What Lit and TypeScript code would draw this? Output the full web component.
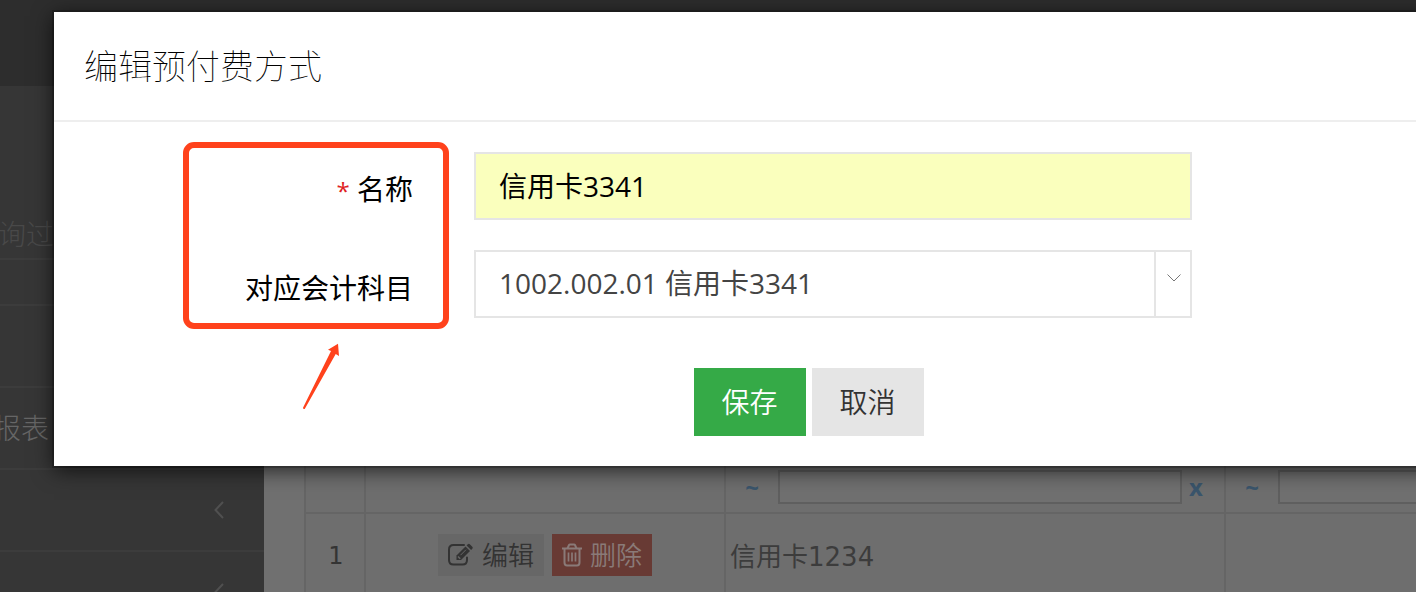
import { LitElement, html, css } from "lit";
import { customElement, state } from "lit/decorators.js";

const editIcon = html`<svg class="ico edit" viewBox="0 0 28 24" aria-hidden="true">
  <path d="M17 2H6.500Q2 2 2 6.500V17Q2 21.500 6.500 21.500H15.500Q20 21.500 20 17V14.500" fill="none" stroke="currentColor" stroke-width="2" stroke-linecap="round"/>
  <path d="M9.500 12.500 18.500 3.500 23 8 14 17H9.500Z" fill="currentColor"/>
  <path d="M19.600 2.400 20.800 1.200Q21.800 .3 22.800 1.200L25.300 3.700Q26.300 4.700 25.300 5.700L24.100 6.900Z" fill="currentColor"/>
  <path d="M13.500 12.200 19 6.700" stroke="#676767" stroke-width="1"/>
  <path d="M11 13.500 13.200 15.700" stroke="#676767" stroke-width="1.500"/>
</svg>`;

const trashIcon = html`<svg class="ico trash" viewBox="0 0 22 24" aria-hidden="true">
  <g fill="none" stroke="currentColor" stroke-width="2">
    <path d="M1 5.500H21M3.500 5.500V19.500Q3.500 22.500 6 22.500H16Q18.500 22.500 18.500 19.500V5.500"/>
    <path d="M6.500 5.500 8 2Q8.300 1.500 9 1.500H13Q13.700 1.500 14 2L15.500 5.500"/>
    <path d="M7.500 9.500V18.500M11 9.500V18.500M14.500 9.500V18.500" stroke-width="1.700"/>
  </g>
</svg>`;

@customElement("app-sidebar")
export class AppSidebar extends LitElement {
  static styles = css`
    :host {
      display: block;
      flex: 0 0 264px;
      background: #363636;
      color: #666;
      overflow: hidden;
      font: 300 28px/48px "Open Sans", "Noto Sans CJK SC", sans-serif;
    }
    ul { list-style: none; margin: 0; padding: 0; }
    li {
      display: flex;
      align-items: center;
      justify-content: space-between;
      box-sizing: border-box;
      height: 82px;
      padding-right: 40px;
      border-bottom: 2px solid #3c3c3c;
    }
    .search { height: 174px; align-items: flex-end; color: #494949; }
    .search span { margin-left: -2px; }
    .short { height: 46px; }
    .report { margin-left: -7px; }
    svg { width: 10px; height: 18px; margin-left: auto; }
  `;
  render() {
    const chevron = html`<svg viewBox="0 0 10 18" aria-hidden="true">
      <path d="M9 1 1.500 9 9 17" fill="none" stroke="#505050" stroke-width="2"/>
    </svg>`;
    return html`<ul>
      <li class="search"><span>询过</span></li>
      <li class="short"></li>
      <li></li>
      <li><span class="report">报表</span></li>
      <li>${chevron}</li>
      <li>${chevron}</li>
    </ul>`;
  }
}

@customElement("payment-table")
export class PaymentTable extends LitElement {
  static styles = css`
    :host {
      display: block;
      flex: 1;
      min-width: 0;
      overflow: hidden;
      background: #707070;
      padding: 374px 0 0 40px;
    }
    table {
      table-layout: fixed;
      width: 1422px;
      border-collapse: separate;
      border-spacing: 0;
      border: solid #656565;
      border-width: 2px 0 0 2px;
      background: #6e6e6e;
      color: #343434;
      font: 26px/42px "DejaVu Sans", "Noto Sans CJK SC", sans-serif;
    }
    td {
      box-sizing: border-box;
      padding: 0;
      border: solid #656565;
      border-width: 0 2px 2px 0;
    }
    .no { width: 60px; text-align: center; font-size: 24px; }
    .row .no { padding: 2px 0 0 2px; }
    .act { width: 360px; }
    .filters td { height: 52px; }
    .row td { height: 84px; }
    .row .name { padding: 4px 0 0 4px; color: #3c3c3c; }
    .filter { display: flex; align-items: center; }
    .filter button {
      flex: none;
      border: 0;
      padding: 0;
      background: none;
      color: #3a556c;
      font: bold 24px/34px "Open Sans", sans-serif;
    }
    .filter .op { width: 52px; }
    .filter .clear { width: 42px; padding-left: 7px; text-align: left; }
    .filter input {
      flex: 1;
      min-width: 0;
      box-sizing: border-box;
      height: 34px;
      border: 2px solid #5f5f5f;
      background: #707070;
    }
    .actions { display: flex; justify-content: center; gap: 8px; }
    .actions button {
      display: flex;
      align-items: center;
      gap: 7px;
      height: 42px;
      padding: 0 10px 0 9px;
      border: 0;
      background: #676767;
      color: #333;
      font: 350 26px/42px "Open Sans", "Noto Sans CJK SC", sans-serif;
    }
    .actions .del { background: #683a34; color: #8a7a78; }
    .ico { height: 24px; }
    .edit { width: 28px; }
    .trash { width: 22px; }
  `;
  private filter(label: string) {
    return html`<div class="filter">
      <button class="op" aria-label="${label}">~</button>
      <input type="text" aria-label="${label}" />
      <button class="clear">x</button>
    </div>`;
  }
  render() {
    return html`<table>
      <tbody>
        <tr class="filters">
          <td class="no"></td>
          <td class="act"></td>
          <td>${this.filter("名称")}</td>
          <td>${this.filter("对应会计科目")}</td>
        </tr>
        <tr class="row">
          <td class="no">1</td>
          <td>
            <div class="actions">
              <button>${editIcon}编辑</button>
              <button class="del">${trashIcon}删除</button>
            </div>
          </td>
          <td class="name">信用卡1234</td>
          <td></td>
        </tr>
      </tbody>
    </table>`;
  }
}

@customElement("edit-dialog")
export class EditDialog extends LitElement {
  @state() private name = "信用卡3341";

  static styles = css`
    :host {
      display: block;
      position: relative;
      background: #fff;
      color: #000;
      box-shadow: 0 0 0 2px rgba(0, 0, 0, 0.2), 0 4px 20px rgba(0, 0, 0, 0.7);
      font: 28px/40px "Open Sans", "Noto Sans CJK SC", sans-serif;
    }
    h4 {
      margin: 0;
      padding: 29px 30px 31px;
      border-bottom: 2px solid #eee;
      font: 100 34px/48px "Noto Sans CJK SC", sans-serif;
    }
    form { display: grid; gap: 30px; padding: 30px 0; }
    .field {
      display: grid;
      grid-template-columns: 359px minmax(0, 1fr);
      column-gap: 61px;
      align-items: center;
      padding-right: 224px;
    }
    label { text-align: right; padding-top: 8px; }
    .req { color: #e02222; font-size: 24px; }
    input, select {
      box-sizing: border-box;
      width: 100%;
      height: 68px;
      margin: 0;
      padding: 0 23px 2px;
      border: 2px solid #e5e5e5;
      border-radius: 0;
      font: inherit;
      color: #000;
      background: #faffbd;
      outline: 0;
    }
    select { appearance: none; background: #fff; color: #444; }
    .combo { position: relative; }
    .toggle {
      position: absolute;
      inset: 2px 2px 2px auto;
      width: 34px;
      border-left: 2px solid #e5e5e5;
      pointer-events: none;
    }
    .toggle svg { display: block; width: 14px; height: 8px; margin: 22px auto 0 11px; }
    .buttons { display: flex; gap: 6px; padding: 20px 0 0 640px; }
    .buttons button {
      width: 112px;
      height: 68px;
      padding: 0 1px 0 0;
      border: 0;
      font: inherit;
      font-weight: 350;
      background: #e5e5e5;
      color: #333;
    }
    .buttons .save { background: #35aa47; color: #fff; }
    .mark {
      position: absolute;
      left: 129px;
      top: 130px;
      box-sizing: border-box;
      width: 266px;
      height: 187px;
      border: 6px solid #ff421c;
      border-radius: 11px;
      pointer-events: none;
    }
    .arrow { position: absolute; left: 248px; top: 331px; width: 40px; height: 68px; }
  `;
  render() {
    return html`
      <h4>编辑预付费方式</h4>
      <form @submit=${(e: Event) => e.preventDefault()}>
        <div class="field">
          <label for="name"><span class="req">*</span> 名称</label>
          <input id="name" type="text" .value=${this.name}
            @input=${(e: Event) => (this.name = (e.target as HTMLInputElement).value)} />
        </div>
        <div class="field">
          <label for="subject">对应会计科目</label>
          <div class="combo">
            <select id="subject"><option>1002.002.01 信用卡3341</option></select>
            <span class="toggle"><svg viewBox="0 0 14 8" aria-hidden="true">
              <path d="M.5 .5 7 7 13.500 .5" fill="none" stroke="#777" stroke-width="1"/>
            </svg></span>
          </div>
        </div>
        <div class="buttons">
          <button class="save" type="submit">保存</button>
          <button type="button">取消</button>
        </div>
      </form>
      <div class="mark"></div>
      <svg class="arrow" viewBox="0 0 40 68" aria-hidden="true">
        <path d="M36 .7 26 6.700 29 8 1 64.700Q1 66.500 2.700 66L33.700 11 37 13Z" fill="#ff421c"/>
      </svg>
    `;
  }
}

@customElement("app-root")
export class AppRoot extends LitElement {
  static styles = css`
    :host {
      display: flex;
      flex-direction: column;
      position: relative;
      height: 100vh;
      overflow: hidden;
    }
    header { flex: 0 0 86px; background: #2d2d2d; }
    main { flex: 1; min-height: 0; display: flex; }
    .layer { position: absolute; inset: 0; padding: 12px 0 0 54px; }
    edit-dialog { margin-right: -40px; padding-right: 40px; }
  `;
  render() {
    return html`
      <header></header>
      <main><app-sidebar></app-sidebar><payment-table></payment-table></main>
      <div class="layer" role="dialog" aria-label="编辑预付费方式"><edit-dialog></edit-dialog></div>
    `;
  }
}
